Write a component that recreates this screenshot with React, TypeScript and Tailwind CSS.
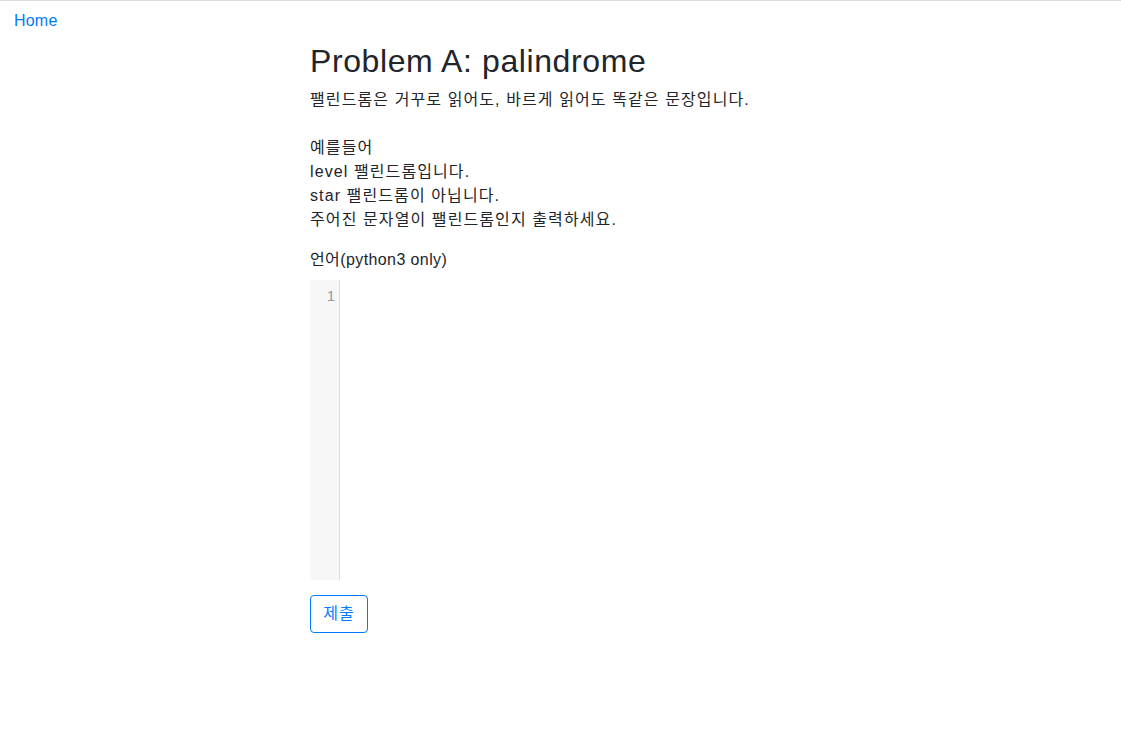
import React from 'react';

const FONT = { fontFamily: '"Liberation Sans", "Noto Sans CJK KR", sans-serif' };

export default function App() {
    return (
        <div className="min-h-screen bg-white text-[#212529] text-base leading-6 border-t border-[#dedede]" style={FONT}>
            {/* Nav */}
            <nav className="px-[14px] pt-2 pb-2">
                <a href="#" className="text-[#007bff] tracking-[0.2px]">Home</a>
            </nav>

            <main className="pl-[310px] pt-[1px]">
                <h2 className="text-[32px] leading-[1.2] font-normal mb-2 tracking-[0.6px]">Problem A: palindrome</h2>
                <p className="whitespace-pre-line mb-4 tracking-[1.1px]">
                    {'팰린드롬은 거꾸로 읽어도, 바르게 읽어도 똑같은 문장입니다.\n\n예를들어\nlevel 팰린드롬입니다.\nstar 팰린드롬이 아닙니다.\n주어진 문자열이 팰린드롬인지 출력하세요.'}
                </p>
                <label className="block mb-2 tracking-[0.4px]">언어(python3 only)</label>

                {/* Code editor */}
                <div className="flex h-[300px] w-[790px]">
                    <div className="w-[30px] bg-[#f7f7f7] border-r border-[#ddd] text-right pr-[4px] pt-[6px] text-[#999] text-[15px] leading-[20px]">
                        1
                    </div>
                    <div className="flex-1 bg-white" />
                </div>

                <button className="mt-[15px] h-[38px] w-[58px] border border-[#007bff] text-[#007bff] rounded tracking-[1px]">
                    제출
                </button>
            </main>
        </div>
    );
}
